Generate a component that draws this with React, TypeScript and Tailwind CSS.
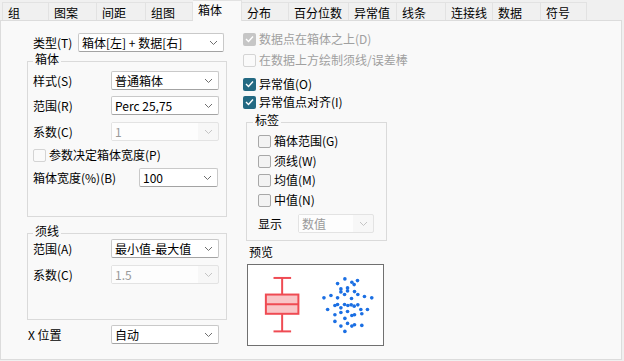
import * as React from 'react';

const TABS: { label: string; w: string }[] = [
  { label: '组', w: 'w-[47px]' },
  { label: '图案', w: 'w-[48px]' },
  { label: '间距', w: 'w-[49px]' },
  { label: '组图', w: 'w-[47px]' },
  { label: '箱体', w: 'w-[49px]' },
  { label: '分布', w: 'w-[47px]' },
  { label: '百分位数', w: 'w-[60px]' },
  { label: '异常值', w: 'w-[48px]' },
  { label: '线条', w: 'w-[49px]' },
  { label: '连接线', w: 'w-[47px]' },
  { label: '数据', w: 'w-[48px]' },
  { label: '符号', w: 'w-[46px]' },
];

// dot positions in 3x preview space (viewBox 52 105 409 247)
const DOTS: [number, number][] = [
  [345, 150], [323, 164], [366, 160], [383, 155], [373, 167], [333, 180], [353, 177],
  [333, 189], [353, 186], [374, 188], [282, 207], [303, 200], [323, 207], [344, 197],
  [365, 209], [384, 197], [404, 203], [426, 207], [315, 230], [323, 227], [333, 237],
  [344, 227], [354, 230], [364, 228], [373, 232], [384, 228], [293, 242], [353, 248],
  [393, 242], [413, 242], [315, 258], [333, 251], [366, 260], [374, 258], [396, 255],
  [345, 269], [315, 278], [333, 292], [353, 284], [366, 292], [374, 288], [396, 290],
  [345, 308],
];

function Chevron(props: { disabled?: boolean }) {
  return (
    <svg width="9" height="6" viewBox="0 0 9 6" className="shrink-0">
      <polyline
        points="1,1 4.5,4.5 8,1"
        fill="none"
        stroke={props.disabled ? '#c4c4c4' : '#6f6f6f'}
        strokeWidth="1"
      />
    </svg>
  );
}

function Select(props: { value: string; w: string; disabled?: boolean }) {
  if (props.disabled) {
    return (
      <div className={`${props.w} h-[19px] shrink-0 flex items-center rounded-[2px] border border-[#e3e3e3] bg-[#f7f7f7]`}>
        <div className="flex-1 h-full flex items-center pl-[3px] bg-[#fdfdfd] text-[#9a9a9a]">{props.value}</div>
        <div className="w-[20px] flex justify-center">
          <Chevron disabled />
        </div>
      </div>
    );
  }
  return (
    <div className={`${props.w} h-[19px] shrink-0 flex items-center justify-between rounded-[2px] border border-[#c9c9c9] border-b-[#a3a3a3] bg-white pl-[3px] pr-[5px] whitespace-nowrap`}>
      <span>{props.value}</span>
      <Chevron />
    </div>
  );
}

function Check(props: { checked?: boolean; disabled?: boolean }) {
  if (props.checked) {
    return (
      <div className={`w-[13px] h-[13px] shrink-0 rounded-[2px] flex items-center justify-center ${props.disabled ? 'bg-[#c6c6c6]' : 'bg-[#236982]'}`}>
        <svg width="9" height="8" viewBox="0 0 9 8">
          <polyline points="1,4 3.5,6.5 8,1.5" fill="none" stroke="white" strokeWidth="1.4" />
        </svg>
      </div>
    );
  }
  return (
    <div className={`w-[13px] h-[13px] shrink-0 rounded-[2px] border ${props.disabled ? 'border-[#d4d4d4] bg-[#fafafa]' : 'border-[#a8a8a8] bg-[#f3f3f3]'}`} />
  );
}

function CheckRow(props: { label: string; checked?: boolean; disabled?: boolean; grayText?: boolean; className?: string }) {
  return (
    <div className={`h-[14px] flex items-center gap-[3px] whitespace-nowrap ${props.className ?? ''}`}>
      <Check checked={props.checked} disabled={props.disabled} />
      <span className={props.grayText ? 'text-[#a0a0a0]' : ''}>{props.label}</span>
    </div>
  );
}

function Group(props: { title: string; titleLeft: string; className?: string; children: React.ReactNode }) {
  return (
    <div className={`relative border border-[#dadada] ${props.className ?? ''}`}>
      <span className={`absolute -top-[9px] ${props.titleLeft} px-[2px] bg-[#f9f9f9] leading-[12px]`}>
        {props.title}
      </span>
      {props.children}
    </div>
  );
}

function FieldRow(props: { label: string; labelW: string; className?: string; children: React.ReactNode }) {
  return (
    <div className={`flex items-center ${props.className ?? ''}`}>
      <span className={`${props.labelW} shrink-0 whitespace-nowrap`}>{props.label}</span>
      {props.children}
    </div>
  );
}

function Preview() {
  return (
    <div className="w-[137px] h-[82px] border border-[#707070] bg-white">
      <svg width="135" height="80" viewBox="55 108 403 241">
        <g stroke="#ef4b53" strokeWidth="6" fill="none">
          <line x1="156" y1="147" x2="156" y2="196" />
          <line x1="156" y1="256" x2="156" y2="308" />
          <line x1="130" y1="147" x2="183" y2="147" />
          <line x1="130" y1="308" x2="183" y2="308" />
          <rect x="107" y="197" width="98" height="58" fill="#f9c5c7" />
          <line x1="107" y1="226" x2="205" y2="226" />
        </g>
        {DOTS.map(([x, y], i) => (
          <circle key={i} cx={x} cy={y} r="5.5" fill="#1b6fe3" />
        ))}
      </svg>
    </div>
  );
}

export default function App() {
  return (
    <div className="w-[624px] h-[361px] bg-[#f0f0f0] text-[12px] leading-[14px] text-black font-['Noto_Sans_CJK_SC','Noto_Sans',sans-serif] overflow-hidden">
      <div className="h-[20px] flex items-end pl-[2px]">
        {TABS.map((t) => {
          const active = t.label === '箱体';
          return (
            <div
              key={t.label}
              className={`${t.w} border-r border-t border-[#e2e2e2] pl-[5px] first:border-l whitespace-nowrap ${
                active ? 'h-[21px] -mb-px bg-[#f9f9f9] pt-[2px] z-10' : 'h-[18px] bg-[#f0f0f0] pt-[3px]'
              }`}
            >
              {t.label}
            </div>
          );
        })}
      </div>

      <div className="w-[622px] h-[340px] border border-[#dcdcdc] bg-[#f9f9f9] flex pl-[26px]">
        {/* left column */}
        <div className="w-[200px] shrink-0 flex flex-col pt-[12px]">
          <FieldRow label="类型(T)" labelW="w-[51px] pl-[6px]">
            <Select value="箱体[左] + 数据[右]" w="w-[146px]" />
          </FieldRow>

          <Group title="箱体" titleLeft="left-[5px]" className="mt-[9px] pt-[9px] pb-[29px] pl-[5px]">
            <FieldRow label="样式(S)" labelW="w-[78px]">
              <Select value="普通箱体" w="w-[108px]" />
            </FieldRow>
            <FieldRow label="范围(R)" labelW="w-[78px]" className="mt-[6px]">
              <Select value="Perc 25,75" w="w-[108px]" />
            </FieldRow>
            <FieldRow label="系数(C)" labelW="w-[78px]" className="mt-[7px]">
              <Select value="1" w="w-[108px]" disabled />
            </FieldRow>
            <CheckRow label="参数决定箱体宽度(P)" disabled className="mt-[7px]" />
            <FieldRow label="箱体宽度(%)(B)" labelW="w-[106px]" className="mt-[6px]">
              <Select value="100" w="w-[79px]" />
            </FieldRow>
          </Group>

          <Group title="须线" titleLeft="left-[5px]" className="mt-[16px] pt-[5px] pb-[35px] pl-[5px]">
            <FieldRow label="范围(A)" labelW="w-[78px]">
              <Select value="最小值-最大值" w="w-[108px]" />
            </FieldRow>
            <FieldRow label="系数(C)" labelW="w-[78px]" className="mt-[7px]">
              <Select value="1.5" w="w-[108px]" disabled />
            </FieldRow>
          </Group>

          <FieldRow label="X 位置" labelW="w-[84px] pl-[1px]" className="mt-[5px]">
            <Select value="自动" w="w-[108px]" />
          </FieldRow>
        </div>

        {/* right column */}
        <div className="ml-[16px] w-[220px] shrink-0 flex flex-col pt-[11px]">
          <CheckRow label="数据点在箱体之上(D)" checked disabled grayText />
          <CheckRow label="在数据上方绘制须线/误差棒" disabled grayText className="mt-[7px]" />
          <CheckRow label="异常值(O)" checked className="mt-[10px]" />
          <CheckRow label="异常值点对齐(I)" checked className="mt-[4px]" />

          <Group title="标签" titleLeft="left-[6px]" className="ml-[3px] w-[141px] mt-[13px] pt-[11px] pb-[7px] pl-[11px]">
            <CheckRow label="箱体范围(G)" />
            <CheckRow label="须线(W)" className="mt-[6px]" />
            <CheckRow label="均值(M)" className="mt-[5px]" />
            <CheckRow label="中值(N)" className="mt-[6px]" />
            <FieldRow label="显示" labelW="w-[40px]" className="mt-[7px]">
              <Select value="数值" w="w-[76px]" disabled />
            </FieldRow>
          </Group>

          <div className="mt-[5px] ml-[6px] leading-[12px]">预览</div>
          <div className="mt-[6px] ml-[4px]">
            <Preview />
          </div>
        </div>
      </div>
    </div>
  );
}
